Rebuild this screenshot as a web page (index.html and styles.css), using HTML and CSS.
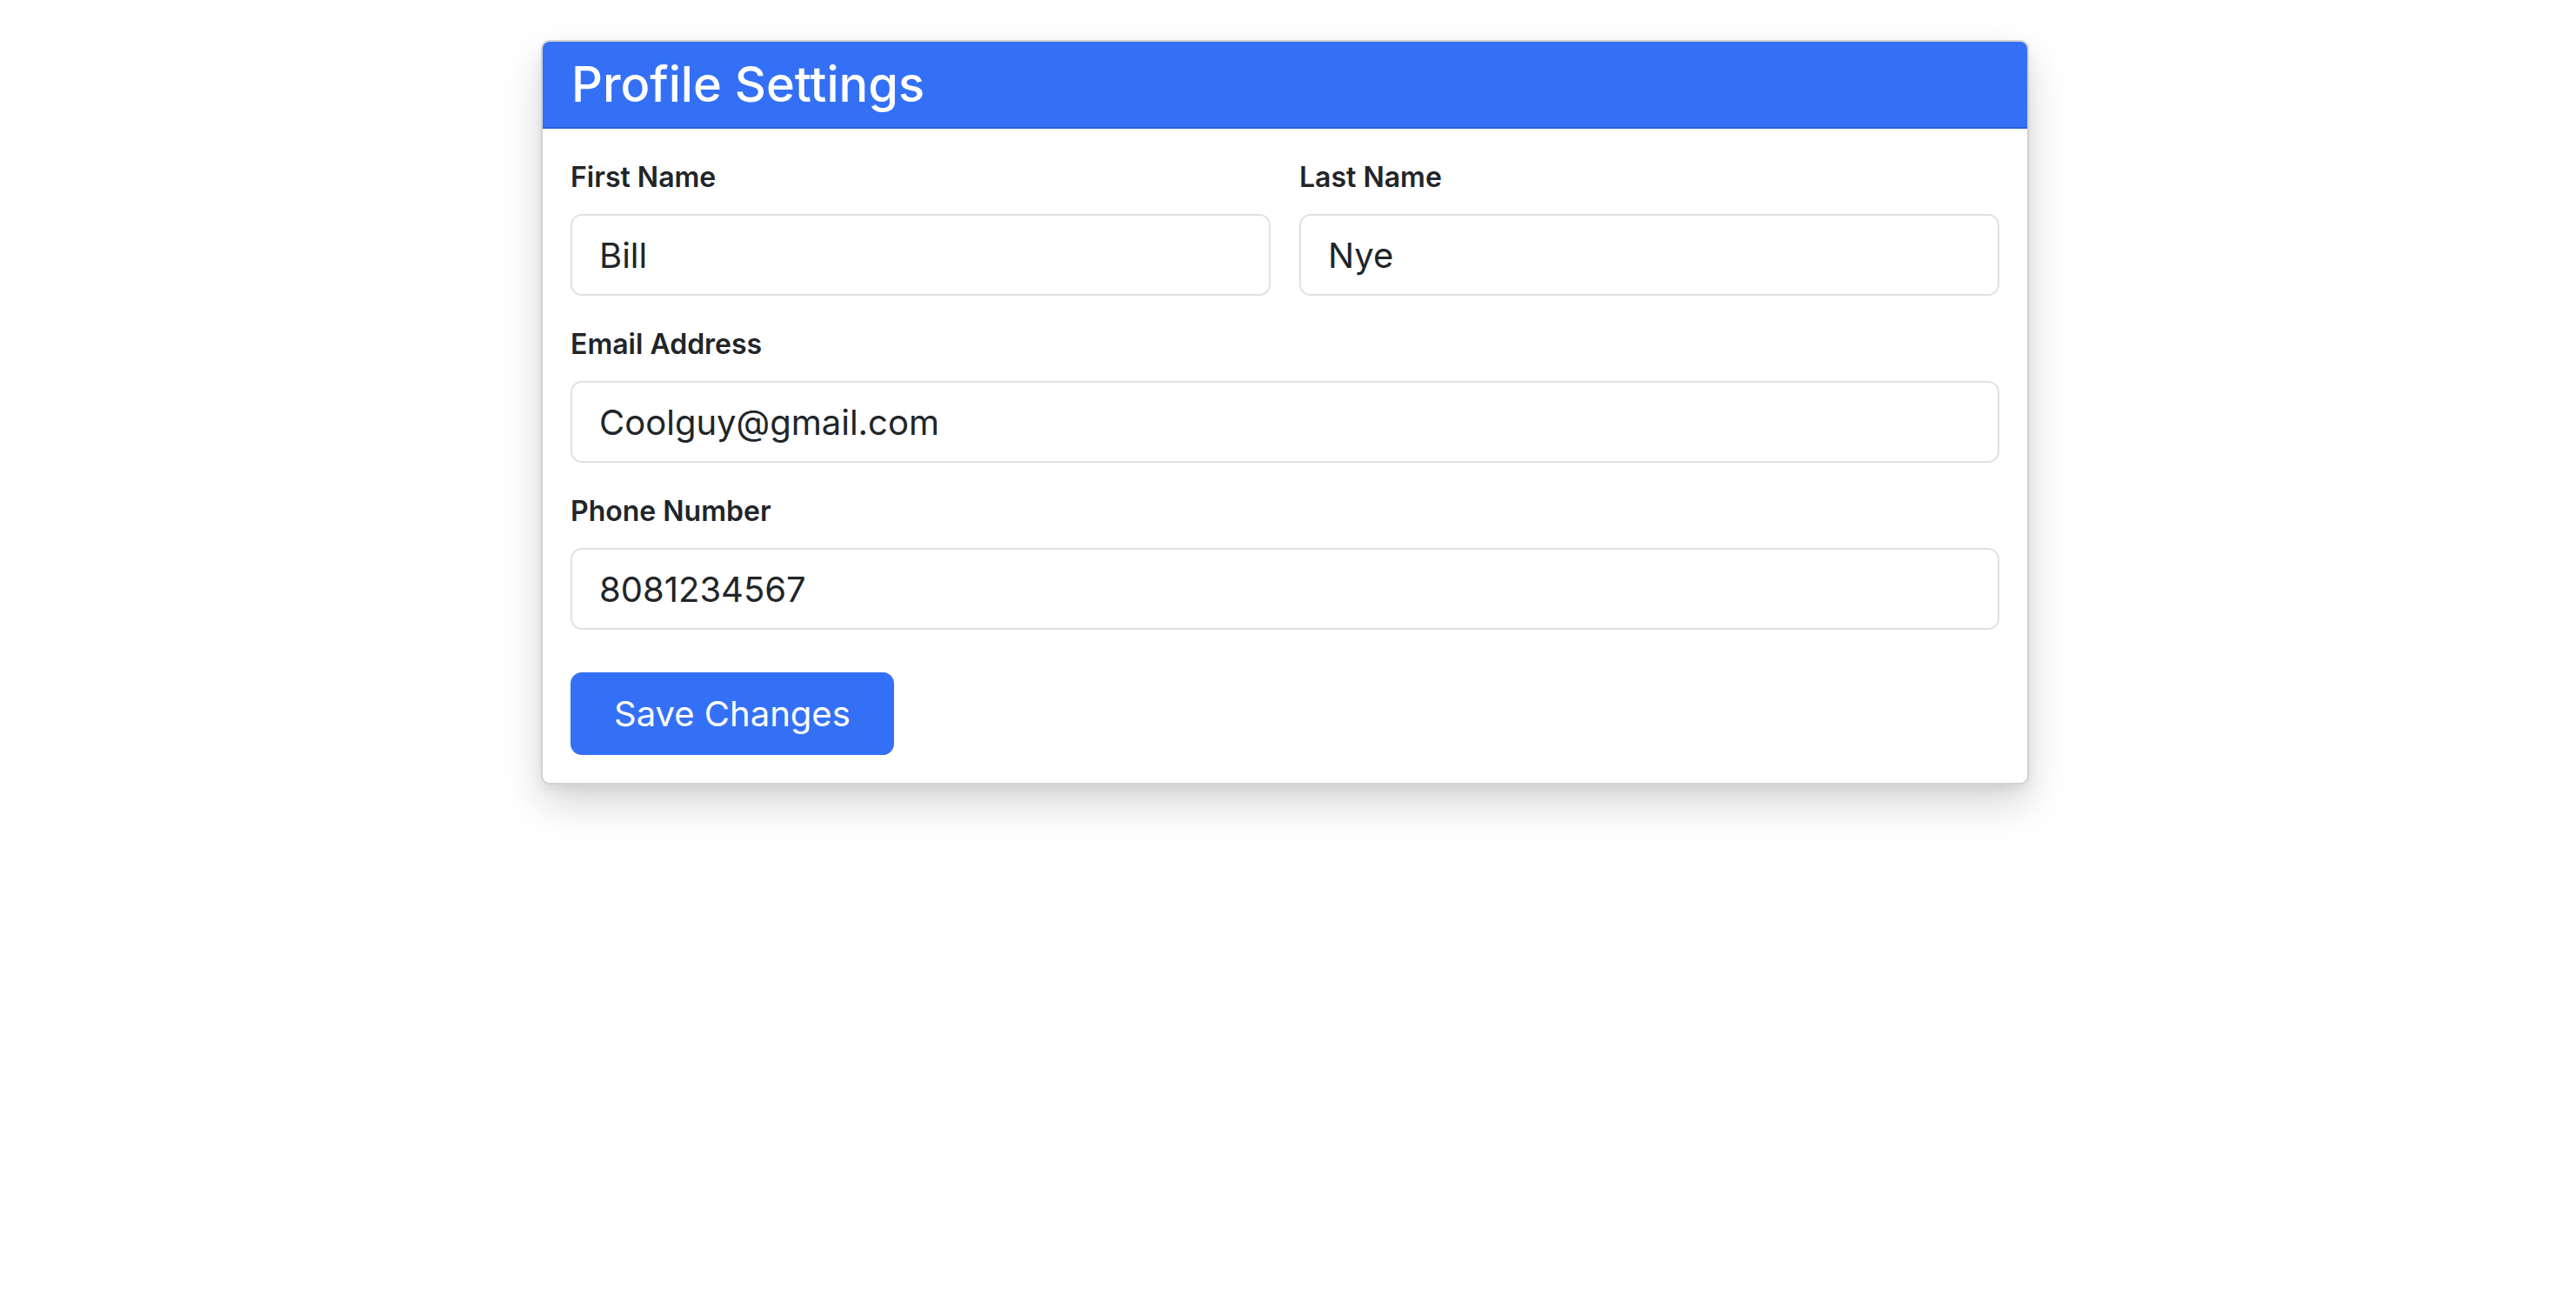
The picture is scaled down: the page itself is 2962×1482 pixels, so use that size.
FILE: index.html
```html
<!DOCTYPE html>
<html lang="en">
<head>
<meta charset="utf-8">
<title>Profile Settings</title>
<link rel="stylesheet" href="styles.css">
</head>
<body>
<div class="page">
  <div class="card">
    <div class="card-header">
      <h1 class="card-title">Profile Settings</h1>
    </div>
    <form class="card-body">
      <div class="row">
        <div class="field">
          <label class="field-label" for="first">First Name</label>
          <input class="field-input" id="first" type="text" value="Bill">
        </div>
        <div class="field">
          <label class="field-label" for="last">Last Name</label>
          <input class="field-input" id="last" type="text" value="Nye">
        </div>
      </div>
      <div class="field">
        <label class="field-label" for="email">Email Address</label>
        <input class="field-input" id="email" type="email" value="Coolguy@gmail.com">
      </div>
      <div class="field">
        <label class="field-label" for="phone">Phone Number</label>
        <input class="field-input" id="phone" type="tel" value="8081234567">
      </div>
      <div class="actions">
        <button class="btn-primary" type="button">Save Changes</button>
      </div>
    </form>
  </div>
</div>
</body>
</html>
```

FILE: styles.css
```css
* {
  box-sizing: border-box;
}

html, body {
  margin: 0;
  padding: 0;
  background: #ffffff;
}

body {
  font-family: Inter, "Noto Sans", "Liberation Sans", sans-serif;
  color: #212529;
}

.page {
  display: flex;
  justify-content: center;
  padding: 46px 7px 80px 0;
}

.card {
  width: 1711px;
  background: #ffffff;
  border: 2px solid #d2d2d2;
  border-radius: 10px;
  overflow: hidden;
  box-shadow: 0 22px 46px rgba(0, 0, 0, 0.16), 0 6px 14px rgba(0, 0, 0, 0.06);
}

.card-header {
  background: #3470f5;
  border-bottom: 2px solid #2a5fd8;
  padding: 16px 33px 15px;
}

.card-title {
  margin: 0;
  font-size: 56px;
  line-height: 67px;
  font-weight: 500;
  color: #ffffff;
}

.card-body {
  display: flex;
  flex-direction: column;
  gap: 32px;
  padding: 32px 32px 32px;
}

.row {
  display: grid;
  grid-template-columns: 1fr 1fr;
  gap: 33px;
}

.field {
  display: flex;
  flex-direction: column;
}

.field-label {
  font-size: 32px;
  line-height: 48px;
  font-weight: 600;
  margin-bottom: 18px;
  color: #212529;
}

.field-input {
  height: 94px;
  width: 100%;
  font-family: inherit;
  font-size: 40px;
  color: #212529;
  padding: 0 31px;
  border: 2px solid #dee2e6;
  border-radius: 13px;
  background: #ffffff;
  outline: none;
}

.actions {
  display: flex;
  padding-top: 17px;
}

.btn-primary {
  height: 95px;
  padding: 0 50px;
  font-family: inherit;
  font-size: 40px;
  font-weight: 400;
  color: #ffffff;
  background: #3470f5;
  border: none;
  border-radius: 13px;
  cursor: pointer;
}
```
